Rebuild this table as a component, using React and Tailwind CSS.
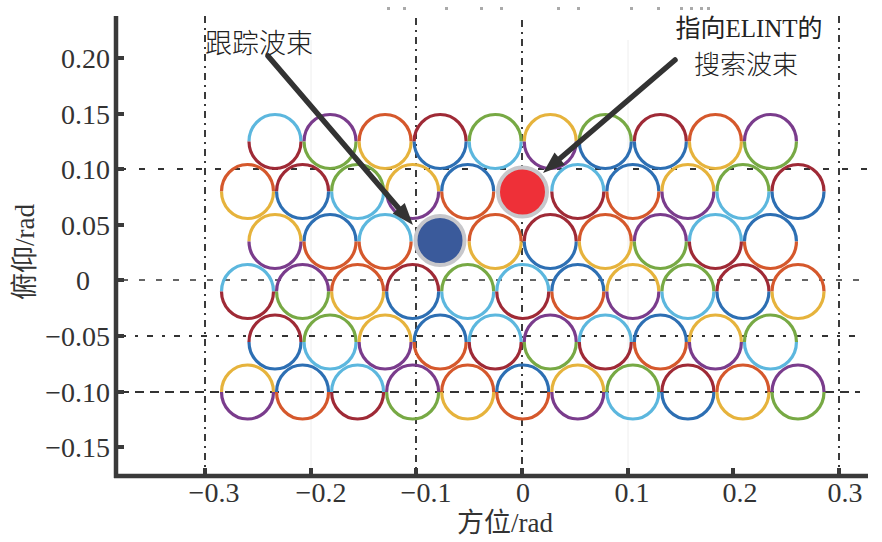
import React from "react";

// MATLAB-ish palette used for the ring halves
const COLORS = {
  B: "#2d6fb3",
  O: "#d5582c",
  Y: "#e6b33c",
  P: "#7a3c8c",
  G: "#77a944",
  C: "#5cb7de",
  R: "#9f2a36",
};

const ROWS = [
  { y: 141.5, x0: 275, c: "CR PG OY RB GC YP GB RB OY PG" },
  { y: 191.5, x0: 247.5, c: "OY RB GC YP BO -- CR BO YP GC RB" },
  { y: 241.5, x0: 275, c: "YP BO CO -- OY RB OY PG CR BO" },
  { y: 291.5, x0: 247.5, c: "CR PG OY RB GC CR BO YP GC RB OY" },
  { y: 342, x0: 275, c: "RB GC YP BO CR PG CR BO YP GC" },
  { y: 392, x0: 247.5, c: "YP BO CR PG OY BO YP GC RB OY PG" },
];

const SERIF = "Liberation Serif, Noto Sans CJK SC, serif";
const CJK = "Noto Sans CJK SC, Liberation Serif, sans-serif";

const Ring = ({ cx, cy, top, bottom }) => {
  const rx = 26;
  const ry = 27;
  return (
    <g fill="none" strokeWidth="3.2">
      <path
        d={`M ${cx - rx} ${cy} A ${rx} ${ry} 0 0 1 ${cx + rx} ${cy}`}
        stroke={COLORS[top]}
      />
      <path
        d={`M ${cx + rx} ${cy} A ${rx} ${ry} 0 0 1 ${cx - rx} ${cy}`}
        stroke={COLORS[bottom]}
      />
    </g>
  );
};

const Arrow = ({ from, to }) => {
  const dx = to[0] - from[0];
  const dy = to[1] - from[1];
  const len = Math.hypot(dx, dy);
  const ux = dx / len;
  const uy = dy / len;
  const head = 22;
  const half = 8;
  const bx = to[0] - ux * head;
  const by = to[1] - uy * head;
  const pts = [
    [to[0], to[1]],
    [bx - uy * half, by + ux * half],
    [bx + uy * half, by - ux * half],
  ]
    .map((p) => p.join(","))
    .join(" ");
  return (
    <g>
      <line
        x1={from[0]}
        y1={from[1]}
        x2={bx + ux * 2}
        y2={by + uy * 2}
        stroke="#333"
        strokeWidth="5.5"
        strokeLinecap="round"
      />
      <polygon points={pts} fill="#333" />
    </g>
  );
};

const yTicks = [
  { y: 58, label: "0.20" },
  { y: 114, label: "0.15" },
  { y: 169, label: "0.10" },
  { y: 225, label: "0.05" },
  { y: 280, label: "0", x: 90 },
  { y: 336, label: "−0.05" },
  { y: 392, label: "−0.10" },
  { y: 447, label: "−0.15" },
];

const xTicks = [
  { x: 205, c: 214, label: "−0.3" },
  { x: 311, c: 321, label: "−0.2" },
  { x: 416, c: 426, label: "−0.1" },
  { x: 522, c: 523, label: "0" },
  { x: 628, c: 632, label: "0.1" },
  { x: 733, c: 740, label: "0.2" },
  { x: 839, c: 845, label: "0.3" },
];

const topMarks = [387, 403, 445, 480, 500, 557, 577, 630, 657, 680, 690, 700, 707];

const Chart = () => {
  return (
    <svg width="882" height="542" viewBox="0 0 882 542" className="block">
      {/* stray marks along the cropped top edge */}
      {topMarks.map((x) => (
        <rect key={x} x={x} y="7" width="3" height="3" fill="#aaa" />
      ))}

      {/* faint minor grid */}
      <line x1="311" y1="40" x2="311" y2="472" stroke="#eee" strokeWidth="1" />
      <line x1="628" y1="40" x2="628" y2="472" stroke="#eee" strokeWidth="1" />

      {/* vertical dash-dot grid */}
      {[
        [205, 16],
        [416, 18],
        [522, 20],
        [839, 16],
      ].map(([x, y0]) => (
        <line
          key={x}
          x1={x}
          y1={y0}
          x2={x}
          y2="474"
          stroke="#3a3a3a"
          strokeWidth="2"
          strokeDasharray="7 5 2 5"
        />
      ))}

      {/* horizontal dashed grid */}
      <line x1="120" y1="169" x2="868" y2="169" stroke="#333" strokeWidth="1.8" strokeDasharray="6 13" />
      <line x1="122" y1="280" x2="868" y2="280" stroke="#333" strokeWidth="1.6" strokeDasharray="6 11" />
      <line x1="120" y1="336" x2="862" y2="336" stroke="#333" strokeWidth="1.8" strokeDasharray="6 9 3 9" />
      <line x1="120" y1="392" x2="860" y2="392" stroke="#333" strokeWidth="1.8" strokeDasharray="9 6" />

      {/* beam rings */}
      {ROWS.map((row, ri) =>
        row.c.split(" ").map((pair, i) =>
          pair === "--" ? null : (
            <Ring
              key={`${ri}-${i}`}
              cx={row.x0 + i * 55.05}
              cy={row.y}
              top={pair[0]}
              bottom={pair[1]}
            />
          )
        )
      )}

      {/* search beam toward ELINT, and tracking beam */}
      <circle cx="522.5" cy="192" r="24.5" fill="#ee3038" stroke="#c7c7cb" strokeWidth="4" />
      <circle cx="440" cy="240.5" r="24.5" fill="#3a5a9b" stroke="#c7c7cb" strokeWidth="4" />

      <Arrow from={[268, 56]} to={[413, 225]} />
      <Arrow from={[675, 60]} to={[543, 173]} />

      {/* axes */}
      <line x1="116" y1="16" x2="116" y2="478" stroke="#3a3a3a" strokeWidth="4.5" />
      <line x1="114" y1="476" x2="868" y2="476" stroke="#3a3a3a" strokeWidth="4.5" />
      {yTicks.map((t) => (
        <line key={t.y} x1="116" y1={t.y} x2="124" y2={t.y} stroke="#3a3a3a" strokeWidth="4" />
      ))}
      {xTicks.map((t) => (
        <line key={t.x} x1={t.x} y1="476" x2={t.x} y2="468" stroke="#3a3a3a" strokeWidth="4" />
      ))}

      {/* tick labels */}
      {yTicks.map((t) => (
        <text
          key={t.y}
          x={t.x ?? 110}
          y={t.y + 10}
          textAnchor="end"
          fontFamily={SERIF}
          fontSize="28"
          fill="#333"
        >
          {t.label}
        </text>
      ))}
      {xTicks.map((t) => (
        <text
          key={t.x}
          x={t.c}
          y="502"
          textAnchor="middle"
          fontFamily={SERIF}
          fontSize="28"
          fill="#333"
        >
          {t.label}
        </text>
      ))}

      {/* axis titles */}
      <text x="457" y="532" fontFamily={SERIF} fontSize="27" fill="#333">
        方位/rad
      </text>
      <text
        transform="translate(34 252) rotate(-90)"
        textAnchor="middle"
        fontFamily={SERIF}
        fontSize="27"
        fill="#333"
      >
        俯仰/rad
      </text>

      {/* annotations */}
      <text x="205" y="53" fontFamily={CJK} fontSize="27" fontWeight="300" fill="#222">
        跟踪波束
      </text>
      <text x="749" y="37" textAnchor="middle" fontFamily={SERIF} fontSize="25" fill="#222">
        指向ELINT的
      </text>
      <text x="746" y="74" textAnchor="middle" fontFamily={CJK} fontSize="26" fontWeight="300" fill="#222">
        搜索波束
      </text>
    </svg>
  );
};

export default function App() {
  return (
    <div className="w-[882px] h-[542px] bg-white overflow-hidden">
      <Chart />
    </div>
  );
}
